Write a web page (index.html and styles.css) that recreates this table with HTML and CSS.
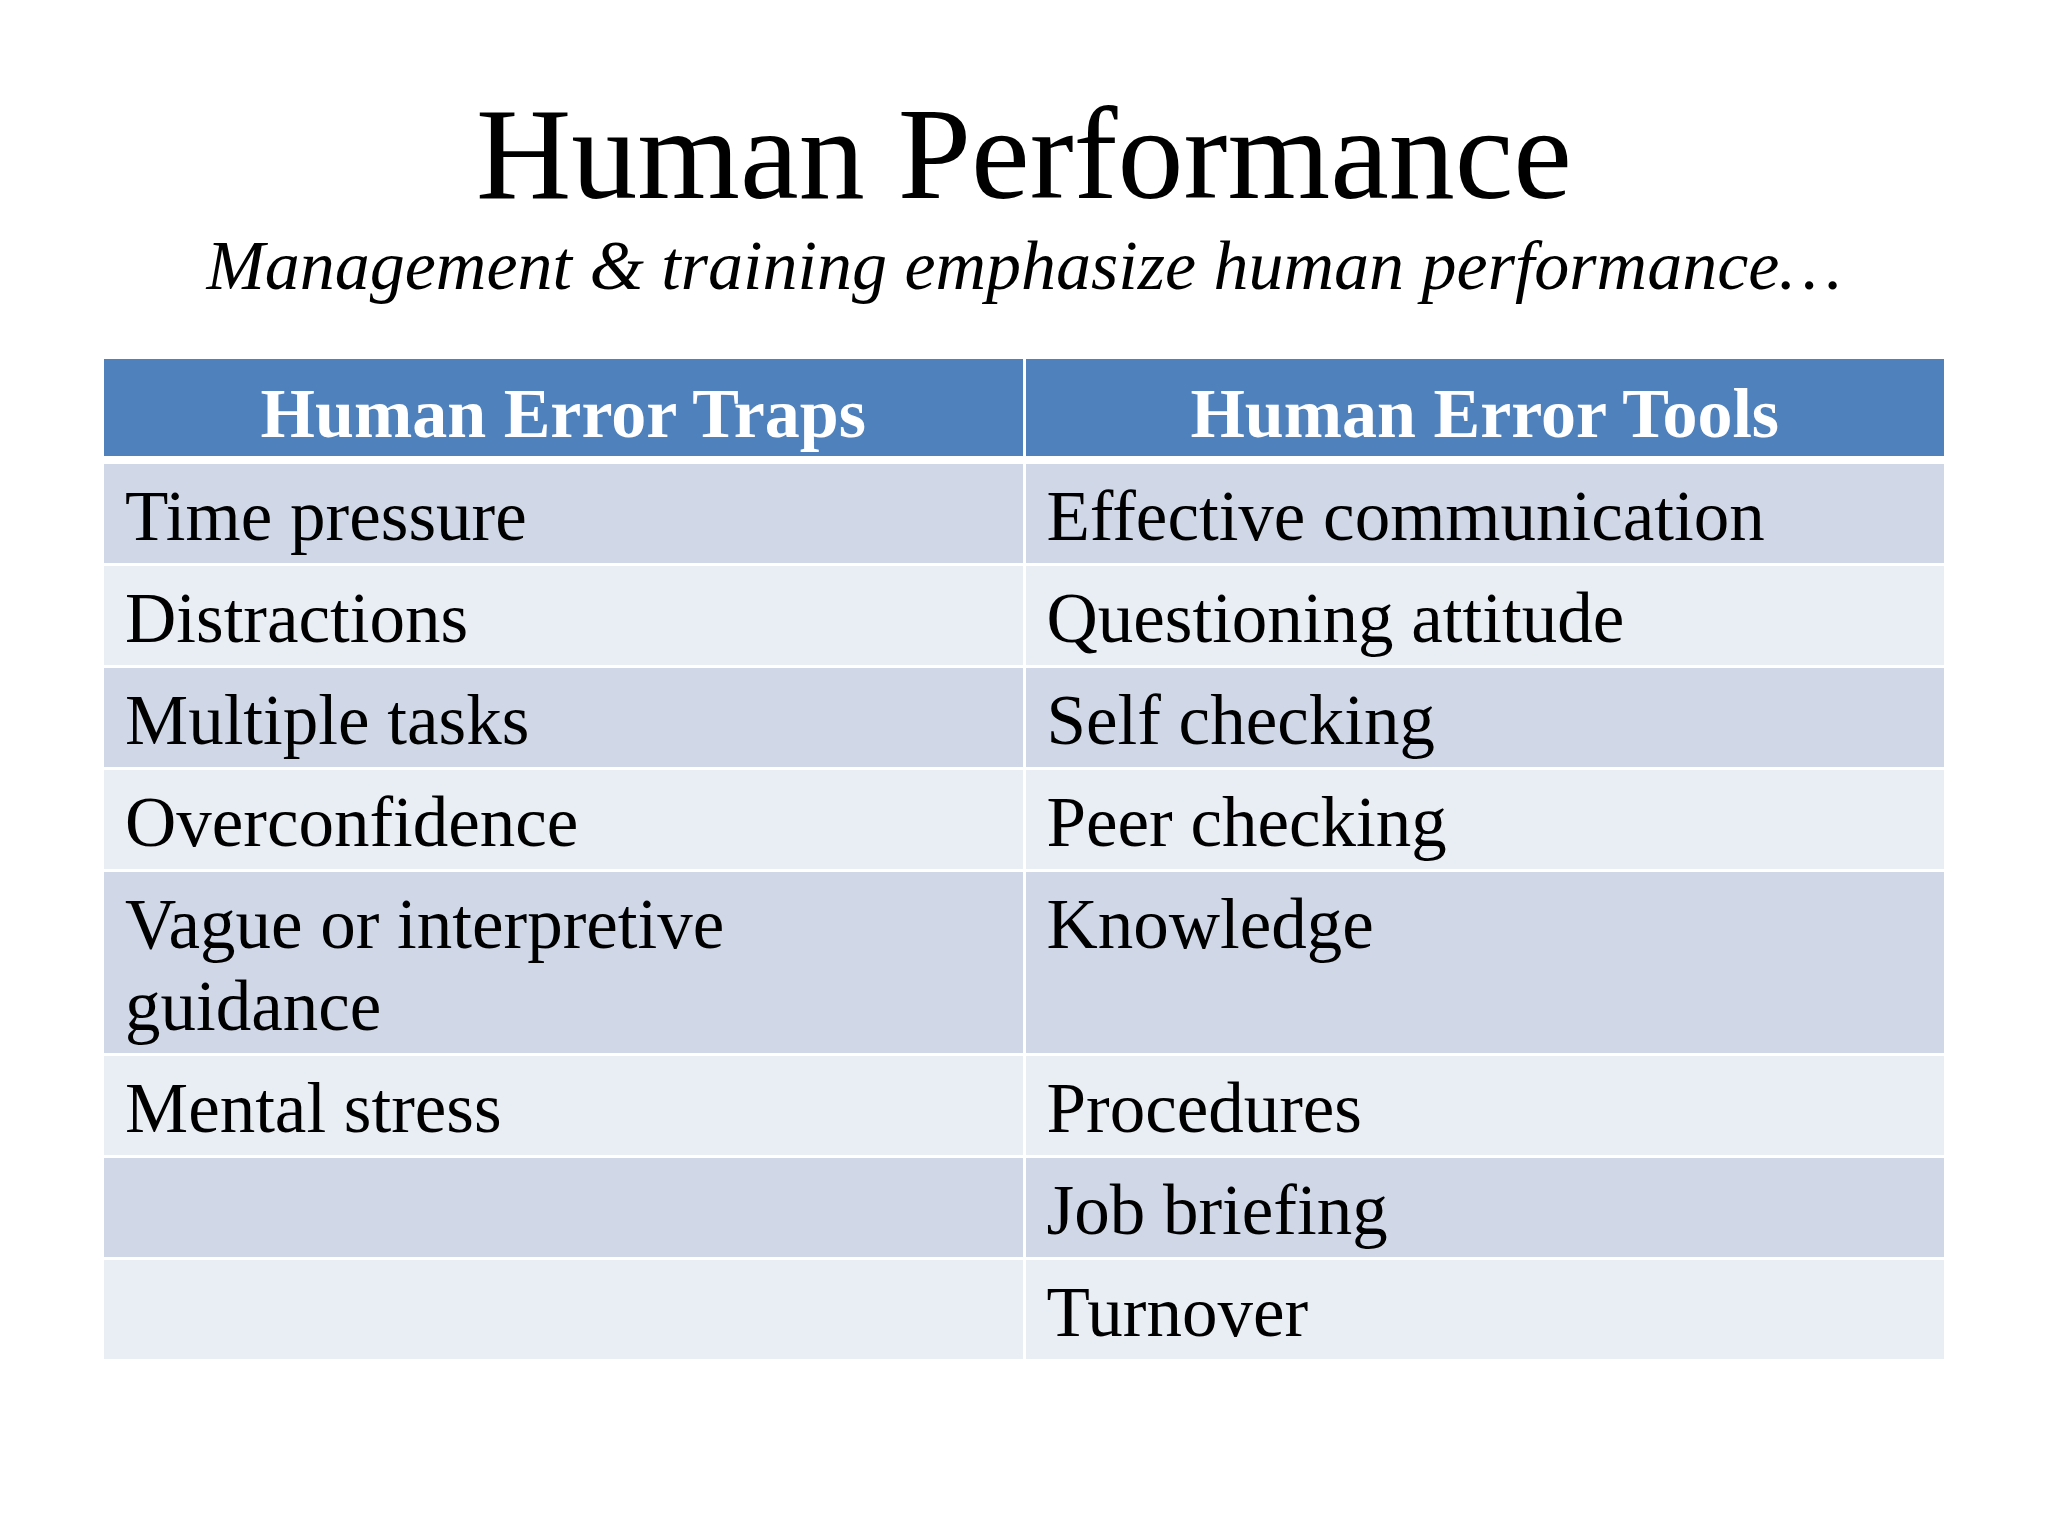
FILE: index.html
```html
<!DOCTYPE html>
<html lang="en">
<head>
<meta charset="utf-8">
<title>Human Performance</title>
<link rel="stylesheet" href="styles.css">
</head>
<body>
<main class="slide">
  <h1 class="title">Human Performance</h1>
  <p class="subtitle">Management &amp; training emphasize human performance…</p>
  <div class="table">
    <div class="cell head">Human Error Traps</div>
    <div class="cell head">Human Error Tools</div>

    <div class="cell odd">Time pressure</div>
    <div class="cell odd">Effective communication</div>

    <div class="cell even">Distractions</div>
    <div class="cell even">Questioning attitude</div>

    <div class="cell odd">Multiple tasks</div>
    <div class="cell odd">Self checking</div>

    <div class="cell even">Overconfidence</div>
    <div class="cell even">Peer checking</div>

    <div class="cell odd">Vague or interpretive<br>guidance</div>
    <div class="cell odd">Knowledge</div>

    <div class="cell even">Mental stress</div>
    <div class="cell even">Procedures</div>

    <div class="cell odd"></div>
    <div class="cell odd">Job briefing</div>

    <div class="cell even"></div>
    <div class="cell even">Turnover</div>
  </div>
</main>
</body>
</html>
```
FILE: styles.css
```css
html, body {
  margin: 0;
  padding: 0;
  background: #ffffff;
}

.slide {
  width: 2048px;
  height: 1536px;
  box-sizing: border-box;
  padding-top: 88px;
  font-family: "Liberation Serif", "Times New Roman", serif;
  color: #000000;
}

.title {
  margin: 0;
  font-size: 132px;
  font-weight: normal;
  line-height: 132px;
  text-align: center;
}

.subtitle {
  margin: 11px 0 0 0;
  font-size: 70px;
  font-style: italic;
  line-height: 70px;
  text-align: center;
}

.table {
  margin: 58px 0 0 104px;
  width: 1840px;
  display: grid;
  grid-template-columns: 1fr 1fr;
  column-gap: 3px;
  row-gap: 3px;
}

.cell {
  font-size: 71px;
  line-height: 82px;
  padding: 11px 20px 6px 21px;
  min-height: 82px;
}

.head {
  background: #4f81bd;
  color: #ffffff;
  font-weight: bold;
  font-size: 70px;
  text-align: center;
  padding: 14px 20px 1px 20px;
  margin-bottom: 5px;
}

.odd {
  background: #d0d8e8;
}

.even {
  background: #e9edf4;
}
```
